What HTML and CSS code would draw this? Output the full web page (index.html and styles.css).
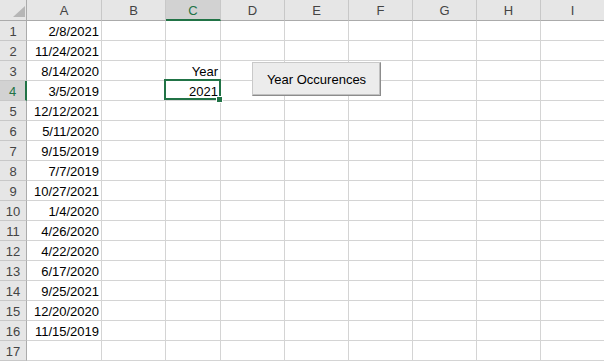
FILE: index.html
```html
<!DOCTYPE html>
<html lang="en">
<head>
  <meta charset="UTF-8" />
  <meta name="viewport" content="width=device-width, initial-scale=1.0" />
  <title>Year Occurences</title>
  <link rel="stylesheet" href="styles.css">
</head>
<body>
  <div class="sheet" id="sheet">
    <button class="macro-btn">Year Occurences</button>
  </div>

  <script>
    const sheet = document.getElementById("sheet");
    const cols = ["A", "B", "C", "D", "E", "F", "G", "H", "I"];
    const dates = [
      "2/8/2021", "11/24/2021", "8/14/2020", "3/5/2019", "12/12/2021",
      "5/11/2020", "9/15/2019", "7/7/2019", "10/27/2021", "1/4/2020",
      "4/26/2020", "4/22/2020", "6/17/2020", "9/25/2021", "12/20/2020",
      "11/15/2019"
    ];
    const values = { "C3": "Year", "C4": "2021" };
    const activeCol = "C";
    const activeRow = 4;

    function addCell(className, text) {
      const div = document.createElement("div");
      div.className = className;
      if (text) div.textContent = text;
      sheet.appendChild(div);
      return div;
    }

    // header row
    const corner = addCell("corner");
    corner.appendChild(document.createElement("span"));
    cols.forEach(c => {
      addCell(c === activeCol ? "col-head selected" : "col-head", c);
    });

    for (let r = 1; r <= 17; r++) {
      addCell(r === activeRow ? "row-head selected" : "row-head", String(r));
      cols.forEach(c => {
        let text = values[c + r] || "";
        if (c === "A" && dates[r - 1]) text = dates[r - 1];
        const isActive = c === activeCol && r === activeRow;
        addCell(isActive ? "cell active" : "cell", text);
      });
    }
  </script>
</body>
</html>
```

FILE: styles.css
```css
body {
  margin: 0;
  background-color: #fff;
  overflow: hidden;
}

.sheet {
  position: relative;
  display: grid;
  grid-template-columns: 27px 75px 64px 55px repeat(6, 64px);
  grid-template-rows: 21px repeat(17, 20px);
  font-family: "Liberation Sans", Arial, sans-serif;
  font-size: 13px;
  color: #000;
}

.corner,
.col-head,
.row-head,
.cell {
  box-sizing: border-box;
  overflow: hidden;
  white-space: nowrap;
}

.corner {
  display: flex;
  justify-content: flex-end;
  align-items: flex-end;
  padding: 0 1px 3px 0;
  background-color: #e6e6e6;
  border-right: 1px solid #ababab;
  border-bottom: 1px solid #ababab;
}

.corner span {
  width: 0;
  height: 0;
  border-left: 12px solid transparent;
  border-bottom: 11px solid #b6b6b6;
}

.col-head {
  background-color: #e6e6e6;
  border-right: 1px solid #c8c8c8;
  border-bottom: 1px solid #ababab;
  text-align: center;
  color: #444;
  padding-top: 2px;
  line-height: 18px;
}

.col-head.selected {
  background-color: #d2d2d2;
  border-bottom: 2px solid #217346;
  color: #217346;
}

.row-head {
  background-color: #e6e6e6;
  border-right: 1px solid #ababab;
  border-bottom: 1px solid #c8c8c8;
  text-align: center;
  color: #444;
  padding-top: 1px;
  line-height: 20px;
}

.row-head.selected {
  background-color: #d2d2d2;
  border-right: 2px solid #217346;
  color: #217346;
}

.cell {
  border-right: 1px solid #d4d4d4;
  border-bottom: 1px solid #d4d4d4;
  text-align: right;
  padding: 1px 2px 0 0;
  line-height: 20px;
}

.cell.active {
  position: relative;
  overflow: visible;
  z-index: 2;
}

.cell.active::after {
  content: "";
  position: absolute;
  top: -2px;
  left: -2px;
  right: -1px;
  bottom: 0;
  border: 2px solid #217346;
}

.cell.active::before {
  content: "";
  position: absolute;
  right: -3px;
  bottom: -3px;
  width: 5px;
  height: 5px;
  background-color: #217346;
  border: 1px solid #fff;
  z-index: 3;
}

.macro-btn {
  position: absolute;
  left: 252px;
  top: 62px;
  width: 129px;
  height: 34px;
  box-sizing: border-box;
  z-index: 4;
  background-color: #ececec;
  border: 1px solid;
  border-color: #c9c9c9 #8c8c8c #8c8c8c #c9c9c9;
  box-shadow: inset -1px -1px 0 #c0c0c0;
  font-family: "Liberation Sans", Arial, sans-serif;
  font-size: 13px;
  color: #000;
  padding: 0;
}
```
